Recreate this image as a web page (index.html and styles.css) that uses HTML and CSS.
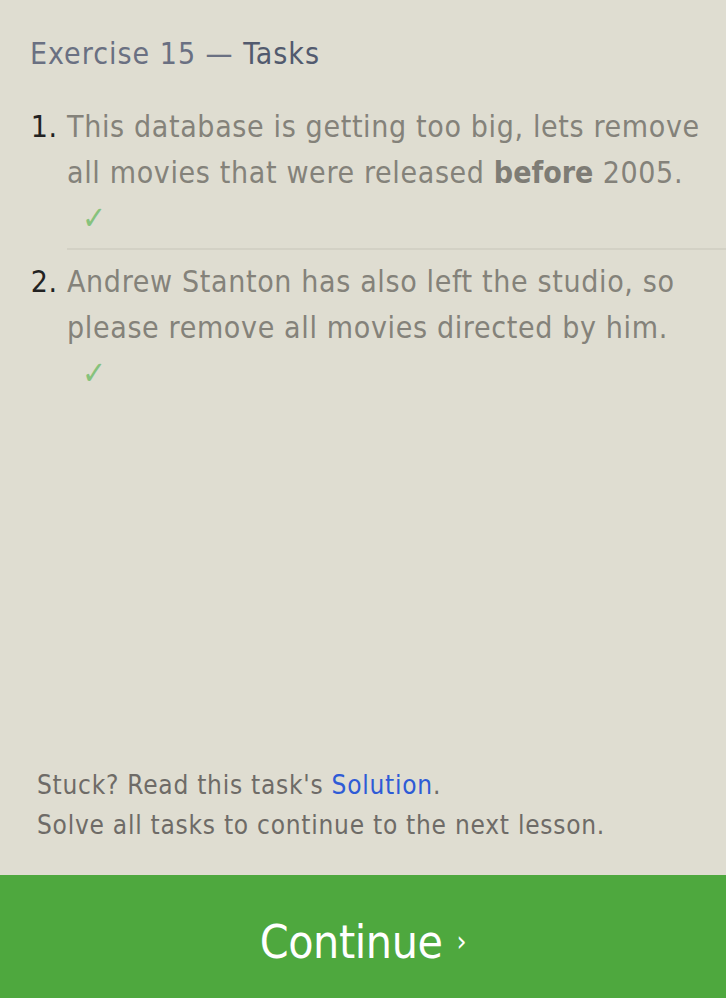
FILE: index.html
```html
<!DOCTYPE html>
<html>
<head>
<meta charset="utf-8">
<link rel="stylesheet" href="styles.css">
</head>
<body>
<div class="page">
  <div class="tasks">
    <h2 class="title"><span class="ex">Exercise 15 — </span><span class="strong">Tasks</span></h2>
    <ol class="list">
      <li class="item">
        <div class="text">This database is getting too big, lets remove all movies that were released <b>before</b> 2005.</div>
        <div class="check">✓</div>
      </li>
      <li class="item">
        <div class="text">Andrew Stanton has also left the studio, so please remove all movies directed by him.</div>
        <div class="check">✓</div>
      </li>
    </ol>
  </div>
  <div class="footer">
    <p class="note">Stuck? Read this task's <a class="link" href="#">Solution</a>.</p>
    <p class="note">Solve all tasks to continue to the next lesson.</p>
  </div>
  <div class="continue">Continue <span class="arrow">›</span></div>
</div>
</body>
</html>
```
FILE: styles.css
```css
html, body {
  margin: 0;
  padding: 0;
  background: #dfddd1;
}
body {
  font-family: "DejaVu Sans Condensed", "DejaVu Sans", Verdana, sans-serif;
}
.page {
  width: 726px;
  height: 998px;
  display: flex;
  flex-direction: column;
  overflow: hidden;
}
.tasks {
  flex: 1;
  padding: 0 0 0 30px;
}
.title {
  margin: 36px 0 0 0;
  font-size: 30px;
  font-weight: normal;
  line-height: 36px;
  letter-spacing: 1px;
  color: #6a7082;
}
.title .strong {
  color: #525a6e;
}
.list {
  margin: 32px 0 0 0;
  padding: 0 0 0 37px;
}
.item {
  font-size: 30px;
  line-height: 46px;
  letter-spacing: 0.65px;
  color: #222;
  padding-bottom: 8px;
}
.item + .item {
  border-top: 2px solid #d3d1c5;
  padding-top: 9px;
}
.text {
  color: #84827a;
}
.text b {
  color: #7e7c75;
  letter-spacing: 0;
}
.check {
  color: #86c27c;
  font-size: 32px;
  line-height: 44px;
  padding-left: 15px;
}
.footer {
  padding: 0 0 30px 37px;
}
.note {
  margin: 0;
  font-size: 26px;
  line-height: 40px;
  letter-spacing: 0.75px;
  color: #6e6b67;
}
.link {
  color: #2e5bd6;
  text-decoration: none;
}
.continue {
  height: 123px;
  box-sizing: border-box;
  padding-top: 10px;
  background: #4ea83e;
  color: #fff;
  font-size: 46px;
  letter-spacing: -0.4px;
  display: flex;
  align-items: center;
  justify-content: center;
}
.arrow {
  font-size: 28px;
  margin-left: 14px;
}
```
